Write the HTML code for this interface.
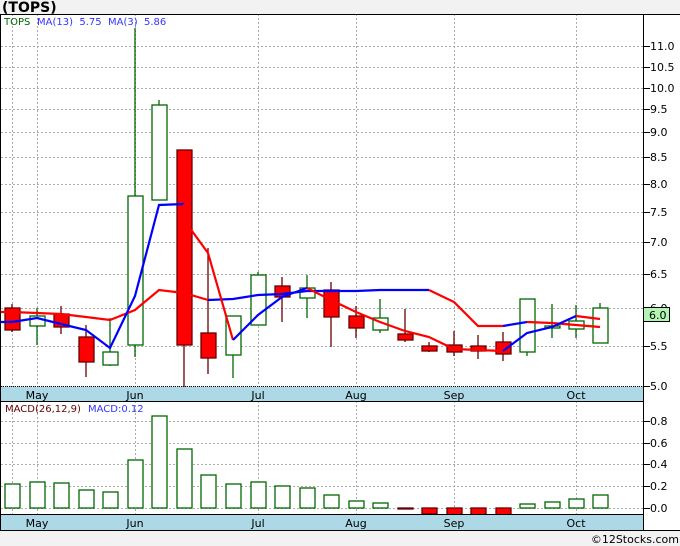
<!DOCTYPE html>
<html><head><style>
body{margin:0;background:#f2f2f2;width:680px;height:546px;overflow:hidden;font-family:"Liberation Sans",sans-serif}
svg{position:absolute;left:0;top:0}
</style></head><body>
<svg width="680" height="546" viewBox="0 0 680 546" font-family="DejaVu Sans, Liberation Sans, sans-serif">
<rect x="0" y="0" width="680" height="546" fill="#f2f2f2"/>
<text x="2" y="12" font-size="14" font-weight="bold" fill="#000">(TOPS)</text>
<rect x="0" y="14" width="680" height="516" fill="#fff"/>
<g stroke="#aaa" stroke-dasharray="2,2" stroke-width="1">
<line x1="1" x2="643" y1="46.5" y2="46.5"/><line x1="1" x2="643" y1="67.5" y2="67.5"/><line x1="1" x2="643" y1="88.5" y2="88.5"/><line x1="1" x2="643" y1="109.5" y2="109.5"/><line x1="1" x2="643" y1="132.5" y2="132.5"/><line x1="1" x2="643" y1="157.5" y2="157.5"/><line x1="1" x2="643" y1="184.5" y2="184.5"/><line x1="1" x2="643" y1="212.5" y2="212.5"/><line x1="1" x2="643" y1="242.5" y2="242.5"/><line x1="1" x2="643" y1="274.5" y2="274.5"/><line x1="1" x2="643" y1="308.5" y2="308.5"/><line x1="1" x2="643" y1="346.5" y2="346.5"/><line x1="1" x2="643" y1="386.5" y2="386.5"/>
<line x1="1" x2="643" y1="421.5" y2="421.5"/><line x1="1" x2="643" y1="443.5" y2="443.5"/><line x1="1" x2="643" y1="464.5" y2="464.5"/><line x1="1" x2="643" y1="486.5" y2="486.5"/><line x1="1" x2="643" y1="508.5" y2="508.5"/>
<g><line x1="12.5" x2="12.5" y1="14" y2="387"/><line x1="37.5" x2="37.5" y1="14" y2="387"/><line x1="135.5" x2="135.5" y1="14" y2="387"/><line x1="258.5" x2="258.5" y1="14" y2="387"/><line x1="356.5" x2="356.5" y1="14" y2="387"/><line x1="454.5" x2="454.5" y1="14" y2="387"/><line x1="576.5" x2="576.5" y1="14" y2="387"/></g>
<g><line x1="12.5" x2="12.5" y1="401" y2="515"/><line x1="37.5" x2="37.5" y1="401" y2="515"/><line x1="135.5" x2="135.5" y1="401" y2="515"/><line x1="258.5" x2="258.5" y1="401" y2="515"/><line x1="356.5" x2="356.5" y1="401" y2="515"/><line x1="454.5" x2="454.5" y1="401" y2="515"/><line x1="576.5" x2="576.5" y1="401" y2="515"/></g>
</g>
<g stroke-width="1.3">
<g stroke="#600"><line x1="12" x2="12" y1="304" y2="332"/><line x1="61" x2="61" y1="306" y2="334"/><line x1="86" x2="86" y1="325" y2="377"/><line x1="184" x2="184" y1="150" y2="387"/><line x1="208" x2="208" y1="248" y2="374"/><line x1="282" x2="282" y1="277" y2="322"/><line x1="331" x2="331" y1="282" y2="347"/><line x1="356" x2="356" y1="306" y2="338"/><line x1="405" x2="405" y1="309" y2="342"/><line x1="429" x2="429" y1="342" y2="352"/><line x1="454" x2="454" y1="331" y2="356"/><line x1="478" x2="478" y1="335" y2="359"/><line x1="503" x2="503" y1="332" y2="361"/></g>
<g stroke="#060"><line x1="37" x2="37" y1="308" y2="345"/><line x1="110" x2="110" y1="318" y2="366"/><line x1="135" x2="135" y1="28" y2="357"/><line x1="159" x2="159" y1="100" y2="200"/><line x1="233" x2="233" y1="316" y2="378"/><line x1="258" x2="258" y1="272" y2="325"/><line x1="307" x2="307" y1="275" y2="318"/><line x1="380" x2="380" y1="299" y2="333"/><line x1="527" x2="527" y1="299" y2="356"/><line x1="552" x2="552" y1="304" y2="338"/><line x1="576" x2="576" y1="305" y2="338"/><line x1="600" x2="600" y1="303" y2="343"/></g>
<g fill="#f00" stroke="#600"><rect x="5" y="308" width="15" height="22"/><rect x="54" y="314" width="15" height="13"/><rect x="79" y="337" width="15" height="25"/><rect x="177" y="150" width="15" height="195"/><rect x="201" y="333" width="15" height="25"/><rect x="275" y="286" width="15" height="11"/><rect x="324" y="290" width="15" height="27"/><rect x="349" y="316" width="15" height="12"/><rect x="398" y="334" width="15" height="6"/><rect x="422" y="346" width="15" height="5"/><rect x="447" y="345" width="15" height="7"/><rect x="471" y="346" width="15" height="5"/><rect x="496" y="342" width="15" height="12"/></g>
<g fill="#fff" stroke="#060"><rect x="30" y="316" width="15" height="10"/><rect x="103" y="352" width="15" height="13"/><rect x="128" y="196" width="15" height="149"/><rect x="152" y="105" width="15" height="95"/><rect x="226" y="316" width="15" height="39"/><rect x="251" y="275" width="15" height="50"/><rect x="300" y="288" width="15" height="10"/><rect x="373" y="318" width="15" height="12"/><rect x="520" y="299" width="15" height="53"/><rect x="545" y="326" width="15" height="2"/><rect x="569" y="321" width="15" height="8"/><rect x="593" y="308" width="15" height="35"/></g>
</g>
<g fill="none" stroke-width="2.2">
<polyline stroke="#f00" points="0,312 12,312 37,313 61,314 86,317 110,320 135,310 159,290 184,293 208,300"/>
<polyline stroke="#00f" points="208,300 233,299 258,295 282,294 307,291 331,291 356,291 380,290 405,290 429,290"/>
<polyline stroke="#f00" points="429,290 454,302 478,326 503,326"/>
<polyline stroke="#00f" points="503,326 527,322"/>
<polyline stroke="#f00" points="527,322 552,323 576,325 600,327"/>
<polyline stroke="#00f" points="0,322 12,322 37,318 61,324 86,330 110,348 135,296 159,205 184,204"/>
<polyline stroke="#f00" points="184,204 184,220 208,253 233,340"/>
<polyline stroke="#00f" points="233,340 258,315 282,297 307,288"/>
<polyline stroke="#f00" points="307,288 331,300 356,312 380,322 405,331 429,337 454,349 478,350 503,351"/>
<polyline stroke="#00f" points="503,351 527,333 552,327 576,316"/>
<polyline stroke="#f00" points="576,316 600,319"/>
</g>
<text x="4" y="25" font-size="10" fill="#060">TOPS</text>
<text x="37" y="25" font-size="10" fill="#33f" xml:space="preserve">MA(13)  5.75  MA(3)  5.86</text>
<g stroke="#060" stroke-width="1.3" fill="#fff">
<rect x="5" y="484" width="15" height="24"/><rect x="30" y="482" width="15" height="26"/><rect x="54" y="483" width="15" height="25"/><rect x="79" y="490" width="15" height="18"/><rect x="103" y="492" width="15" height="16"/><rect x="128" y="460" width="15" height="48"/><rect x="152" y="416" width="15" height="92"/><rect x="177" y="449" width="15" height="59"/><rect x="201" y="475" width="15" height="33"/><rect x="226" y="484" width="15" height="24"/><rect x="251" y="482" width="15" height="26"/><rect x="275" y="486" width="15" height="22"/><rect x="300" y="488" width="15" height="20"/><rect x="324" y="495" width="15" height="13"/><rect x="349" y="501" width="15" height="7"/><rect x="373" y="503" width="15" height="5"/><rect x="520" y="504" width="15" height="4"/><rect x="545" y="502" width="15" height="6"/><rect x="569" y="499" width="15" height="9"/><rect x="593" y="495" width="15" height="13"/>
</g>
<g fill="#f00" stroke="#600" stroke-width="1.3"><rect x="398" y="508" width="15" height="1"/><rect x="422" y="508" width="15" height="6"/><rect x="447" y="508" width="15" height="7"/><rect x="471" y="508" width="15" height="7"/><rect x="496" y="508" width="15" height="7"/></g>
<text x="5" y="412" font-size="10" fill="#600">MACD(26,12,9)</text>
<text x="88" y="412" font-size="10" fill="#33f">MACD:0.12</text>
<rect x="1" y="387" width="642" height="14" fill="#add8e6"/>
<rect x="1" y="515" width="642" height="15" fill="#add8e6"/>
<g stroke="#000"><line x1="1" x2="643" y1="386.5" y2="386.5" stroke-dasharray="1,1"/><line x1="0" x2="643" y1="401.5" y2="401.5"/><line x1="0" x2="643" y1="514.5" y2="514.5"/><line x1="0" x2="680" y1="530.5" y2="530.5"/><line x1="0" x2="680" y1="14.5" y2="14.5"/><line x1="0.5" x2="0.5" y1="14" y2="530"/><line x1="643.5" x2="643.5" y1="14" y2="530"/></g>
<g font-size="11" fill="#000" text-anchor="middle"><text x="37" y="399">May</text><text x="135" y="399">Jun</text><text x="258" y="399">Jul</text><text x="356" y="399">Aug</text><text x="454" y="399">Sep</text><text x="576" y="399">Oct</text>
<text x="37" y="527">May</text><text x="135" y="527">Jun</text><text x="258" y="527">Jul</text><text x="356" y="527">Aug</text><text x="454" y="527">Sep</text><text x="576" y="527">Oct</text></g>
<g stroke="#000"><line x1="643" x2="650" y1="46.5" y2="46.5"/><line x1="643" x2="650" y1="67.5" y2="67.5"/><line x1="643" x2="650" y1="88.5" y2="88.5"/><line x1="643" x2="650" y1="109.5" y2="109.5"/><line x1="643" x2="650" y1="132.5" y2="132.5"/><line x1="643" x2="650" y1="157.5" y2="157.5"/><line x1="643" x2="650" y1="184.5" y2="184.5"/><line x1="643" x2="650" y1="212.5" y2="212.5"/><line x1="643" x2="650" y1="242.5" y2="242.5"/><line x1="643" x2="650" y1="274.5" y2="274.5"/><line x1="643" x2="650" y1="308.5" y2="308.5"/><line x1="643" x2="650" y1="346.5" y2="346.5"/><line x1="643" x2="650" y1="386.5" y2="386.5"/><line x1="643" x2="650" y1="421.5" y2="421.5"/><line x1="643" x2="650" y1="443.5" y2="443.5"/><line x1="643" x2="650" y1="464.5" y2="464.5"/><line x1="643" x2="650" y1="486.5" y2="486.5"/><line x1="643" x2="650" y1="508.5" y2="508.5"/></g>
<g font-size="11" fill="#000"><text x="650" y="50">11.0</text><text x="650" y="71">10.5</text><text x="650" y="92">10.0</text><text x="650" y="113">9.5</text><text x="650" y="136">9.0</text><text x="650" y="161">8.5</text><text x="650" y="188">8.0</text><text x="650" y="216">7.5</text><text x="650" y="246">7.0</text><text x="650" y="278">6.5</text><text x="650" y="312">6.0</text><text x="650" y="350">5.5</text><text x="650" y="390">5.0</text>
<text x="650" y="425">0.8</text><text x="650" y="447">0.6</text><text x="650" y="468">0.4</text><text x="650" y="490">0.2</text><text x="650" y="512">0.0</text></g>
<rect x="643.5" y="307.5" width="26" height="14" fill="#b3f5b3" stroke="#000"/>
<text x="649" y="319" font-size="11" fill="#000">6.0</text>
<text x="679" y="543" font-size="11" fill="#000" text-anchor="end">©12Stocks.com</text>
</svg>
</body></html>
